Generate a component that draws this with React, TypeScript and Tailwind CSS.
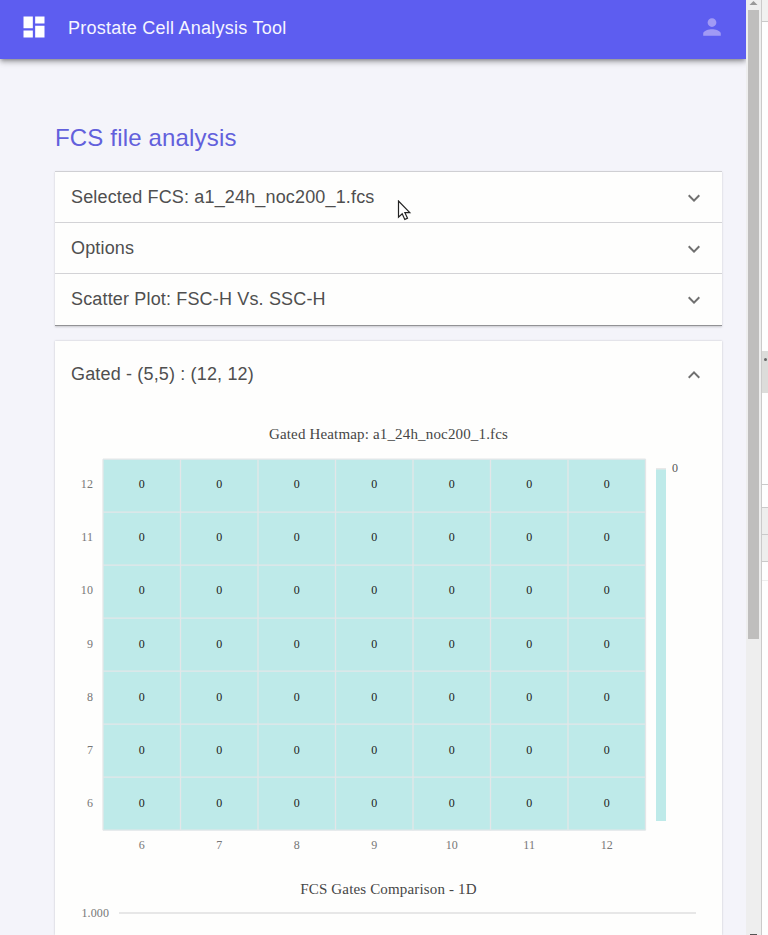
import React from "react";

const SERIF = '"Liberation Serif", "Times New Roman", serif';
const COLUMNS = [6, 7, 8, 9, 10, 11, 12];
const ROWS = [12, 11, 10, 9, 8, 7, 6];

const GRID = { x: 48, y: 51.2, cellW: 77.5, cellH: 53 };

function Chevron({ up = false }: { up?: boolean }) {
  return (
    <svg viewBox="0 0 24 24" className="h-6 w-6 fill-[#707070]">
      <path
        d={
          up
            ? "M12 8l-6 6 1.41 1.41L12 10.83l4.59 4.58L18 14z"
            : "M16.59 8.59L12 13.17 7.41 8.59 6 10l6 6 6-6z"
        }
      />
    </svg>
  );
}

function PanelHeader({ title, open, className = "" }: { title: string; open?: boolean; className?: string }) {
  return (
    <div className={`flex items-center justify-between pr-4 pl-4 text-[18px] tracking-[0.16px] text-[#4f4f4f] ${className}`}>
      <span className="whitespace-nowrap">{title}</span>
      <span className="pt-px">
        <Chevron up={open} />
      </span>
    </div>
  );
}

function Charts() {
  const right = GRID.x + GRID.cellW * 7;
  const bottom = GRID.y + GRID.cellH * 7;
  return (
    <svg width="667" height="527" viewBox="0 0 667 527" className="block" fontFamily={SERIF}>
      <text x="333.5" y="31" textAnchor="middle" fontSize="15" letterSpacing="0.16" fill="#464646">
        Gated Heatmap: a1_24h_noc200_1.fcs
      </text>
      <rect x={GRID.x} y={GRID.y} width={right - GRID.x} height={bottom - GRID.y} fill="#beeae9" />
      {Array.from({ length: 8 }, (_, i) => (
        <g key={i} stroke="#e3e6e8" strokeWidth="1.3">
          <line x1={GRID.x + i * GRID.cellW} x2={GRID.x + i * GRID.cellW} y1={GRID.y} y2={bottom} />
          <line x1={GRID.x} x2={right} y1={GRID.y + i * GRID.cellH} y2={GRID.y + i * GRID.cellH} />
        </g>
      ))}
      {ROWS.map((row, r) => {
        const y = 80.3 + r * 53.07;
        return (
          <g key={row} fontSize="12">
            <text x="38" y={y} textAnchor="end" letterSpacing="0.1" fill="#777">
              {row}
            </text>
            {COLUMNS.map((column, c) => (
              <text key={column} x={GRID.x + (c + 0.5) * GRID.cellW} y={y} textAnchor="middle" fill="#222">
                0
              </text>
            ))}
          </g>
        );
      })}
      {COLUMNS.map((column, c) => (
        <text
          key={column}
          x={GRID.x + (c + 0.5) * GRID.cellW}
          y="441"
          textAnchor="middle"
          fontSize="12"
          letterSpacing="0.1"
          fill="#777"
        >
          {column}
        </text>
      ))}
      <rect x="601" y="60" width="10" height="2" fill="#e8e8e8" />
      <rect x="601" y="61.5" width="10" height="351.5" fill="#beeae9" />
      <text x="617" y="64" fontSize="12" fill="#555">
        0
      </text>
      <text x="333.5" y="486" textAnchor="middle" fontSize="15" letterSpacing="0.16" fill="#464646">
        FCS Gates Comparison - 1D
      </text>
      <text x="54" y="509" textAnchor="end" fontSize="12" letterSpacing="0.1" fill="#777">
        1.000
      </text>
      <rect x="64" y="504" width="577" height="2" fill="#e7e7e7" />
    </svg>
  );
}

function Scrollbar() {
  return (
    <div className="flex h-full w-[15px] shrink-0 flex-col items-center bg-[#eeeeee]">
      <svg width="15" height="10" viewBox="0 0 15 10" className="block shrink-0">
        <path d="M3.5 5L7.5 1l4 4z" fill="#999" />
      </svg>
      <div className="h-[629px] w-[11px] bg-[#bfbebd]" />
      <div className="mt-auto h-px w-[7px] bg-[#555]" />
    </div>
  );
}

// Sliver of the window behind, visible along the right edge.
function BackgroundWindow() {
  return (
    <div className="flex h-full w-[7px] shrink-0 flex-col border-l border-[#cbcaca] bg-[#fefefe]">
      <div className="h-[22px] border-b border-[#cacaca] bg-[#f1f1f0]" />
      <div className="h-[329px]" />
      <div className="flex h-[42px] justify-center bg-[#dcdcda] pt-[7px]">
        <div className="h-[3px] w-[3px] rounded-full bg-[#666]" />
      </div>
      <div className="h-[92px] border-b border-[#cacaca]" />
      <div className="h-[23px] border-b border-[#cacaca]" />
      <div className="h-[27px] border-b border-[#cacaca] bg-[#eeeeed]" />
      <div className="h-[27px] border-b border-[#cacaca] bg-[#eeeeed]" />
      <div className="h-[19px] border-b border-[#ededed]" />
    </div>
  );
}

export default function App() {
  return (
    <div className="relative flex h-[935px] w-[768px] overflow-hidden bg-[#f4f4fa] font-['Liberation_Sans',Arial,sans-serif]">
      <div className="flex w-[746px] shrink-0 flex-col overflow-hidden">
        <header className="flex h-[59px] shrink-0 items-center bg-[#5d5df0] pb-[5px] pl-[20px] pr-[22px] shadow-[0_2px_4px_-1px_rgba(0,0,0,0.35),0_4px_5px_0_rgba(0,0,0,0.14),0_1px_10px_0_rgba(0,0,0,0.1)]">
          <svg viewBox="0 0 24 24" className="h-[28px] w-[28px] fill-white">
            <path d="M3 13h8V3H3v10zm0 8h8v-6H3v6zm10 0h8V11h-8v10zm0-18v6h8V3h-8z" />
          </svg>
          <h1 className="ml-5 pt-[2px] text-[18px] tracking-[0.25px] whitespace-nowrap text-[#f5f5ff]">Prostate Cell Analysis Tool</h1>
          <svg viewBox="0 0 24 24" className="ml-auto h-6 w-6 fill-[#a19af5]">
            <path d="M12 12c2.21 0 4-1.79 4-4s-1.79-4-4-4-4 1.79-4 4 1.79 4 4 4zm0 2c-2.67 0-8 1.34-8 4v2h16v-2c0-2.66-5.33-4-8-4z" transform="translate(-1.2 -1.2) scale(1.1)" />
          </svg>
        </header>
        <main className="flex flex-col pl-[55px] pt-[62px]">
          <h2 className="h-[50px] text-[24px] leading-[34px] tracking-[0.17px] text-[#6260dc]">FCS file analysis</h2>
          <section className="w-[667px] divide-y divide-[#d3d3d6] border-t border-b border-t-[#cfcfd3] border-b-[#929295] bg-[#fefefd] shadow-[0_1px_2px_rgba(0,0,0,0.18)]">
            <PanelHeader title="Selected FCS: a1_24h_noc200_1.fcs" className="h-[51px]" />
            <PanelHeader title="Options" className="h-[51px]" />
            <PanelHeader title="Scatter Plot: FSC-H Vs. SSC-H" className="h-[51px]" />
          </section>
          <section className="mt-[15px] w-[667px] bg-[#fefefd] shadow-[0_0_2px_rgba(0,0,0,0.2)]">
            <PanelHeader title="Gated - (5,5) : (12, 12)" open className="h-[67px]" />
            <Charts />
          </section>
        </main>
      </div>
      <Scrollbar />
      <BackgroundWindow />
      <svg width="16" height="23" viewBox="0 0 16 23" className="absolute left-[397px] top-[200px]">
        <path
          d="M1.5 1v16.2l3.7-3.5 2.6 5.7 2.7-1.2-2.6-5.5h4.9z"
          fill="#fff"
          stroke="#222"
          strokeWidth="1.2"
        />
      </svg>
    </div>
  );
}
